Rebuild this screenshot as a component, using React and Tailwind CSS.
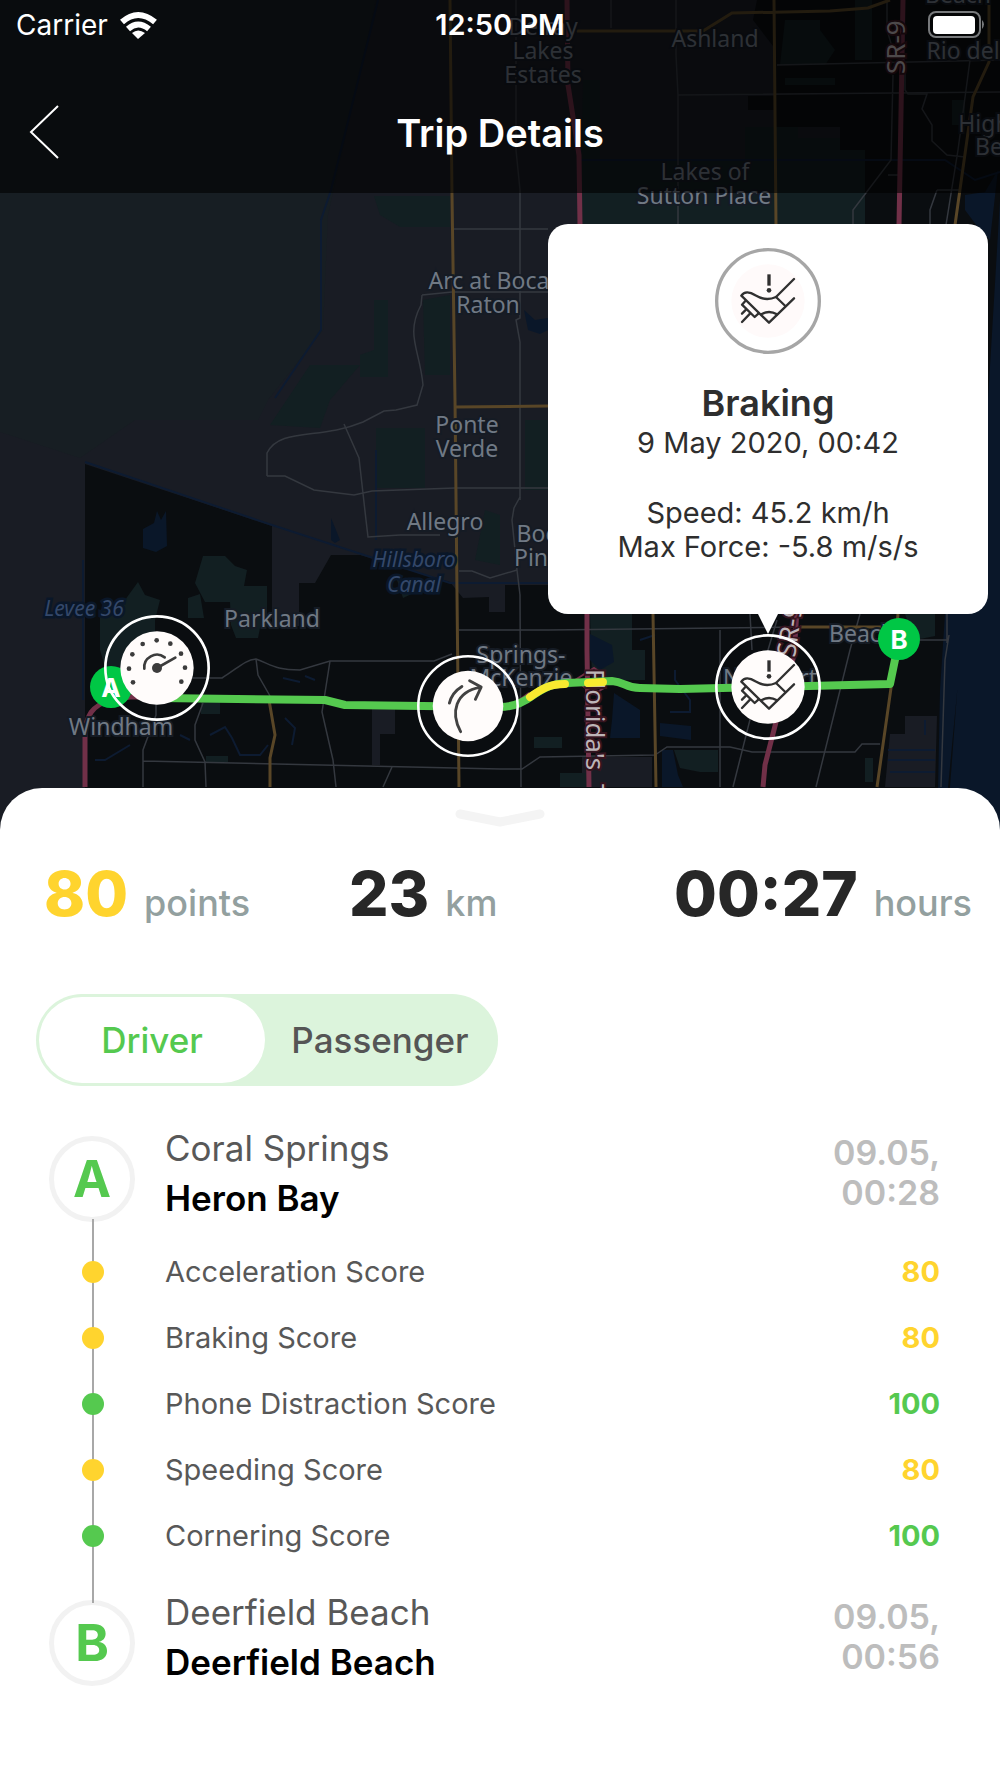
import { useState } from 'react';

const STATS = [
  { value: '80', unit: 'points', className: 'w-[305px]', color: 'text-[#ffd42e]' },
  { value: '23', unit: 'km', className: '', color: 'text-[#272727]' },
  { value: '00:27', unit: 'hours', className: 'ml-auto', color: 'text-[#272727]' },
];

const SCORES = [
  { label: 'Acceleration Score', value: 80 },
  { label: 'Braking Score', value: 80 },
  { label: 'Phone Distraction Score', value: 100 },
  { label: 'Speeding Score', value: 80 },
  { label: 'Cornering Score', value: 100 },
];

const MAP_LABELS = [
  { x: 543, y: 35, text: 'Delray' },
  { x: 543, y: 59, text: 'Lakes' },
  { x: 543, y: 83, text: 'Estates' },
  { x: 715, y: 47, text: 'Ashland' },
  { x: 958, y: 3, text: 'Beach' },
  { x: 963, y: 59, text: 'Rio del' },
  { x: 984, y: 132, text: 'High' },
  { x: 989, y: 155, text: 'Be' },
  { x: 705, y: 180, text: 'Lakes of' },
  { x: 704, y: 204, text: 'Sutton Place' },
  { x: 489, y: 289, text: 'Arc at Boca' },
  { x: 488, y: 313, text: 'Raton' },
  { x: 467, y: 433, text: 'Ponte' },
  { x: 467, y: 457, text: 'Verde' },
  { x: 445, y: 530, text: 'Allegro' },
  { x: 543, y: 542, text: 'Boca' },
  { x: 543, y: 566, text: 'Pines' },
  { x: 272, y: 627, text: 'Parkland' },
  { x: 121, y: 735, text: 'Windham' },
  { x: 521, y: 663, text: 'Springs-' },
  { x: 521, y: 686, text: 'McKenzie' },
  { x: 770, y: 686, text: 'Newport' },
  { x: 862, y: 642, text: 'Beach' },
];

const WATER_LABELS = [
  { x: 84, y: 616, text: 'Levee 36' },
  { x: 414, y: 567, text: 'Hillsboro' },
  { x: 414, y: 592, text: 'Canal' },
];

const LOCAL_ROADS = [
  'M516 0V150L520 190V318L516 320 520 342V500',
  'M611 0V28M676 0V55L678 95V225M555 31H577',
  'M678 95 1000 92M777 65 1000 60M887 0V30L893 50M893 75 891 160 853 210V225',
  'M905 70V90L908 94H927L922 109 932 125V141L947 155 965 157M970 60 958 150 946 225M937 190H960M937 190 930 210V225M888 175H898',
  'M453 229H548M422 295 452 292H548M422 295 421 305C405 335 420 350 423 385L417 405 396 410 384 411 363 422C320 440 280 427 267 453V476',
  'M267 476H285L314 490 354 495 372 491 455 488H548M344 424 359 458 366 520 368 537 400 535H440',
  'M459 571H472L490 578 517 570 520 595 521 787M517 570 512 520 514 508 520 497',
  'M459 630H548L800 627M190 678H222C238 668 245 660 256 659C272 665 275 670 300 670L330 661H434L452 654',
  'M256 659 258 675 270 696M330 661 322 712 333 760 336 787M203 703 195 725V740L205 762 206 787',
  'M156 700V715L143 750V787M143 761 500 769H522L540 757 655 755M655 755 667 747H730L752 752H855L862 744H880',
  'M392 767 383 787M720 630V787M750 614 752 650M777 620 765 660 733 787M860 614 850 650 816 787M947 643V614M949 635 945 660 941 787M915 640H947',
];

const MAIN_ROADS = [
  'M450 0 452 195 455 400 459 787',
  'M774 0 776 225M577 31H703L732 13 830 11 868 8 890 0M989 0V62L973 97 955 225',
  'M455 407 548 406M653 614 656 787M800 627H886M898 614 891 688 877 787M269 700 275 735 270 758V787',
];

const HIGHWAYS = [
  'M567 0 568 85 579 155 580 225M587 610V650L589 787',
  'M903 0 899 225M797 610 794 655 776 722 765 765 763 787',
  'M85 787V735C86 715 92 706 110 700L130 697H180M515 705 530 694',
];

function MapCanvas() {
  return (
    <svg className="absolute inset-0 h-full w-full" viewBox="0 0 1000 840" aria-hidden="true">
      <rect width="1000" height="840" fill="#191c24" />
      <path fill="#171e23" d="M0 0H376L328 215 323 330 268 400 258 420H135L80 458 0 432Z" />

      {/* Built-up areas */}
      <g fill="#0a0d10">
        <path d="M85 464 272 526V626H299V583H315L331 555H360L450 582 463 598 489 597V612H505V585H1000V840H85Z" />
        <path d="M757 0H1000V600H910L865 225V150H840V127H798V138H776V110H748V96H776V50L753 20Z" />
      </g>
      <path fill="#191c24" d="M372 709H395V734H380V765H372ZM582 757H652V787H582ZM905 716H937L935 787H885L890 734H905Z" />

      {/* Parks */}
      <g fill="#121f22">
        <path d="M374 196H450V227H400L380 215ZM374 300H388V377H360V355L374 350ZM310 365H360L330 400 320 428 270 425ZM423 300 450 295V375H425ZM376 428H425V488H376ZM525 420H548V490H525Z" />
        <path d="M203 556H225L235 566 247 570 244 586H267V620L260 628 258 638 236 638 231 625 230 602H205L195 583Z" />
        <path d="M138 582 145 595 160 600 155 620V690H112L100 650V610L125 600ZM188 598 200 594 204 618H188ZM485 510 500 515V565L475 560ZM395 574 420 590 403 598Z" />
        <path d="M583 80H600V160H745V127H798V138H840V150H865V225H581ZM785 20H820V30L835 50 825 65H780ZM785 78H835V85H785ZM855 0H872V60H855ZM952 100H965V125H952Z" />
        <path d="M590 614H632V650H645V680H592ZM534 737H562V748H534ZM674 750H718V772H700L680 768ZM560 773H587V787H560ZM865 758H873V782H865ZM905 614H935V636L915 640ZM201 702H220V714H201ZM206 756H228V762H206Z" />
      </g>

      {/* Water */}
      <g fill="#0a1729">
        <path d="M1000 200 988 400 984 600 963 614 946 840H1000ZM937 614 945 614 940 690 937 840H943L962 640 964 614Z" />
        <path d="M143 529 154 523 157 511 161 520 166 511 167 546 156 552 143 548ZM331 518 336 530 340 540 335 543 331 540ZM524 310 535 320 548 318V330L540 334 528 330Z" />
        <path d="M590 634 612 645 614 662 600 670 590 660ZM614 693 640 710V738H610L612 720ZM660 723 691 726V740L660 736ZM662 750 673 750 678 775 683 787H662Z" />
        <path d="M965 195 985 192 998 170 990 240 980 230 965 210Z" />
      </g>
      <g fill="none" stroke="#0d1b31" strokeWidth="2">
        <path d="M378 0 331 190 321 220V330L275 398" />
        <path d="M85 462 272 525 450 583H548M83 560V700M376 450V540" />
        <path d="M210 735 225 727 232 738 240 755H260L268 745M285 718 295 728 292 745M180 735 190 740M95 760H105L130 745M283 678 300 682M305 676 315 680M580 160H945L975 180 1000 172" />
        <path d="M640 640 655 635M675 670V680L690 700V712H670M888 750H935M888 760H935M890 772H935M925 720V735" />
      </g>

      <g fill="none" stroke="#34383f" strokeWidth="1.5">
        {LOCAL_ROADS.map((d) => <path key={d} d={d} />)}
      </g>
      <g fill="none" stroke="#594627" strokeWidth="3">
        {MAIN_ROADS.map((d) => <path key={d} d={d} />)}
      </g>
      <g fill="none" stroke="#713048" strokeWidth="5">
        {HIGHWAYS.map((d) => <path key={d} d={d} />)}
      </g>
      <path fill="none" stroke="#713048" strokeWidth="2" d="M575 680 594 668 604 675V688L594 694Z" />

      {/* Place names */}
      <g
        className="font-['Noto_Sans',sans-serif] text-[23px]"
        fill="#707984"
        stroke="#151b24"
        strokeWidth="4"
        paintOrder="stroke"
        textAnchor="middle"
      >
        {MAP_LABELS.map((l) => <text key={`${l.text}${l.x}${l.y}`} x={l.x} y={l.y}>{l.text}</text>)}
      </g>
      <g
        className="font-['Noto_Sans',sans-serif] text-[21px] italic"
        fill="#34486a"
        stroke="#0a1729"
        strokeWidth="5"
        paintOrder="stroke"
        textAnchor="middle"
      >
        {WATER_LABELS.map((l) => <text key={l.text} x={l.x} y={l.y}>{l.text}</text>)}
      </g>
      <g
        className="font-['Noto_Sans',sans-serif] text-[26px]"
        fill="#bdb5b8"
        stroke="#35141f"
        strokeWidth="4"
        paintOrder="stroke"
      >
        <text transform="translate(586 669) rotate(90)">Florida&apos;s</text>
        <text transform="translate(586 784) rotate(90)">Turnpike</text>
        <text transform="translate(905 74) rotate(-90)">SR-9</text>
        <text transform="translate(795 658) rotate(-82)">SR-9</text>
      </g>

      {/* Route */}
      <g fill="none" strokeLinejoin="round">
        <path stroke="#55c94f" strokeWidth="8" d="M160 698 325 700 345 705 500 707C515 707 524 702 532 696C545 687 552 684 567 683L612 681C625 682 625 688 640 688L680 689 768 687 890 684 897 650" />
        <path stroke="#f8ea30" strokeWidth="8" strokeLinecap="round" d="M530 697C543 688 550 684 565 684M588 683 603 682" />
      </g>
    </svg>
  );
}

function BrakeIcon() {
  return (
    <g fill="none" stroke="#303030" strokeWidth="7" strokeLinecap="round" strokeLinejoin="round">
      <path d="M78-66 24-12C-2 0-20-6-38-17-56-29-72-28-80-16L3 65 78-8" />
      <path d="M24-12 52 15M-20 40Q3 26 27 40" />
      <path d="M-68 0-78 11-40 48-29 38M-78 38-66 26M-78 63-54 38" />
      <path strokeLinecap="butt" d="M3-80V-46" strokeWidth="10" />
      <circle cx="3" cy="-32" r="7" fill="#303030" stroke="none" />
    </g>
  );
}

function SpeedIcon() {
  const dots = [[-72, 43], [-84, 2], [-74, -41], [-43, -72], [-1, -83], [40, -73], [72, -43], [84, -1], [73, 41]];
  return (
    <g fill="#3c3c3c">
      {dots.map(([x, y]) => <circle key={x} cx={x} cy={y} r="7" />)}
      <circle r="15" />
      <path d="M-38 2A38 38 0 0 1 23-32M0 0 55-31" fill="none" stroke="#3c3c3c" strokeWidth="8" strokeLinecap="round" />
    </g>
  );
}

function CornerIcon() {
  return (
    <path
      d="M-23 80C-55 22-40-45 38-58M5-79 41-59 23-21M-58-9Q-50-42-19-61"
      fill="none"
      stroke="#424242"
      strokeWidth="9"
      strokeLinecap="round"
      strokeLinejoin="round"
    />
  );
}

function EventMarker({ label, className, children }) {
  return (
    <button type="button" aria-label={label} className={`absolute -translate-x-1/2 -translate-y-1/2 ${className}`}>
      <svg className="size-full" viewBox="-159 -159 318 318">
        <circle r="110" fill="#fffcfb" />
        <circle r="155" fill="none" stroke="#fff" strokeWidth="8" />
        {children}
      </svg>
    </button>
  );
}

function EndPoint({ letter, className }) {
  return (
    <div className={`absolute flex size-[42px] -translate-x-1/2 -translate-y-1/2 items-center justify-center rounded-full bg-[#00c745] text-[26px] font-bold text-white ${className}`}>
      {letter}
    </div>
  );
}

function EventCallout() {
  return (
    <div className="absolute top-[224px] left-[548px] flex w-[440px] flex-col items-center rounded-[20px] bg-white pt-6 pb-[50px] text-center text-[#2e2e2e]">
      <svg className="size-[106px]" viewBox="-159 -159 318 318" aria-hidden="true">
        <circle r="154" fill="none" stroke="#a6a6a6" strokeWidth="10" />
        <circle r="110" fill="#fffafa" />
        <BrakeIcon />
      </svg>
      <h2 className="mt-7 text-[36px] leading-[42px] font-semibold">Braking</h2>
      <p className="mt-0.5 text-[29px] leading-[34px]">9 May 2020, 00:42</p>
      <p className="mt-9 text-[29px] leading-[34px]">
        Speed: 45.2 km/h
        <br />
        Max Force: -5.8 m/s/s
      </p>
      <svg className="absolute top-full h-5 w-5" viewBox="0 0 20 20" aria-hidden="true">
        <path d="M0 0H20L10 20Z" fill="#fff" />
      </svg>
    </div>
  );
}

function StatusBar() {
  return (
    <div className="grid h-[50px] grid-cols-3 items-center pr-4 pl-4 text-[28px] text-white">
      <div className="flex items-center gap-3">
        <span>Carrier</span>
        <svg className="h-7 w-[37px]" viewBox="0 0 37 28" aria-label="Wi-Fi">
          <g fill="none" stroke="#fff" strokeWidth="6">
            <path d="M2 11Q18 -3 35 11" />
            <path d="M8 18Q18 9 29 18" />
          </g>
          <path d="M12 22Q18 17 25 22L18 28Z" fill="#fff" />
        </svg>
      </div>
      <span className="text-center text-[29px] font-semibold">12:50 PM</span>
      <svg className="h-7 w-14 justify-self-end" viewBox="0 0 56 28" aria-label="Battery full">
        <rect x="1" y="1" width="51" height="25" rx="7" fill="none" stroke="#77797b" strokeWidth="2" />
        <rect x="5" y="5" width="42" height="18" rx="4" fill="#fff" />
        <path d="M54 9Q58 13 54 18Z" fill="#77797b" />
      </svg>
    </div>
  );
}

function Stop({ letter, city, area, date, time }) {
  return (
    <li className="flex h-[100px] items-center">
      <div className="mt-[13px] flex size-[86px] items-center justify-center self-start rounded-full border-[5px] border-[#f2f2f2] bg-white text-[51px] font-bold text-[#55c94f]">
        {letter}
      </div>
      <div className="ml-[30px] text-[35px] leading-[50px]">
        <p className="text-[#585858]">{city}</p>
        <p className="font-semibold text-black">{area}</p>
      </div>
      <p className="ml-auto text-right text-[34px] leading-10 font-semibold text-[#bdbdbd]">
        {date}
        <br />
        {time}
      </p>
    </li>
  );
}

export default function App() {
  const [role, setRole] = useState('Driver');

  return (
    <div className="min-h-screen bg-white font-['Inter',sans-serif]">
      <div className="relative h-[840px] overflow-hidden bg-[#191c24]">
        <div className="absolute inset-y-0 left-1/2 w-[1000px] -translate-x-1/2">
          <MapCanvas />
          <EndPoint letter="A" className="top-[687px] left-[111px]" />
          <EndPoint letter="B" className="top-[639px] left-[899px]" />
          <EventMarker label="Speeding" className="top-[668px] left-[157px] size-[106px]"><SpeedIcon /></EventMarker>
          <EventMarker label="Cornering" className="top-[706px] left-[468px] size-[102px]"><CornerIcon /></EventMarker>
          <EventMarker label="Braking" className="top-[687px] left-[768px] size-[106px]"><BrakeIcon /></EventMarker>
          <EventCallout />
        </div>

        <header className="relative h-[193px] bg-black/60">
          <StatusBar />
          <div className="grid grid-cols-3 items-start pt-[54px] text-white">
            <button type="button" aria-label="Back" className="ml-7 w-8">
              <svg className="h-14 w-8" viewBox="0 0 32 56" fill="none" stroke="#fff" strokeWidth="2">
                <path d="M30 2 3 28 30 54" />
              </svg>
            </button>
            <h1 className="text-center text-[38px] leading-[58px] font-semibold">Trip Details</h1>
          </div>
        </header>
      </div>

      <main className="relative -mt-[52px] rounded-t-[42px] bg-white pt-5 pb-[90px]">
        <button type="button" aria-label="Collapse" className="mx-auto block h-5 w-[90px]">
          <svg viewBox="0 0 90 20" fill="none" stroke="#f4f4f4" strokeWidth="9" strokeLinecap="round" strokeLinejoin="round">
            <path d="M5 6 45 14 85 6" />
          </svg>
        </button>

        <div className="mt-[33px] flex pr-7 pl-11">
          {STATS.map((s) => (
            <p key={s.unit} className={`flex items-baseline gap-4 ${s.className}`}>
              <span className={`text-[62px] leading-[66px] font-extrabold ${s.color}`}>{s.value}</span>
              <span className="text-[36px] font-medium text-[#93a09f]">{s.unit}</span>
            </p>
          ))}
        </div>

        <div className="mt-16 ml-9 flex h-[92px] w-[462px] rounded-full bg-[#dcf4dc] p-[3px] text-[35px] font-medium">
          {['Driver', 'Passenger'].map((r) => (
            <button
              key={r}
              type="button"
              aria-pressed={role === r}
              onClick={() => setRole(r)}
              className={`flex-auto rounded-full first:w-[226px] last:w-[230px] ${role === r ? 'bg-white text-[#55c94f]' : 'text-[#555]'}`}
            >
              {r}
            </button>
          ))}
        </div>

        <ol className="relative mt-[37px] pr-[60px] pl-[49px]">
          <div className="absolute top-24 bottom-[84px] left-[92px] z-10 w-0.5 bg-[#a8a8a8]" />
          <Stop letter="A" city="Coral Springs" area="Heron Bay" date="09.05," time="00:28" />
          <li>
            <ul className="mt-4 mb-[18px]">
              {SCORES.map((s) => (
                <li key={s.label} className="flex h-[66px] items-center text-[29px]">
                  <span className={`relative z-20 ml-[33px] size-[22px] rounded-full ${s.value === 100 ? 'bg-[#55c94f]' : 'bg-[#ffd42e]'}`} />
                  <span className="ml-[61px] text-[#585858]">{s.label}</span>
                  <span className={`ml-auto font-bold ${s.value === 100 ? 'text-[#55c94f]' : 'text-[#ffd42e]'}`}>{s.value}</span>
                </li>
              ))}
            </ul>
          </li>
          <Stop letter="B" city="Deerfield Beach" area="Deerfield Beach" date="09.05," time="00:56" />
        </ol>
      </main>
    </div>
  );
}
